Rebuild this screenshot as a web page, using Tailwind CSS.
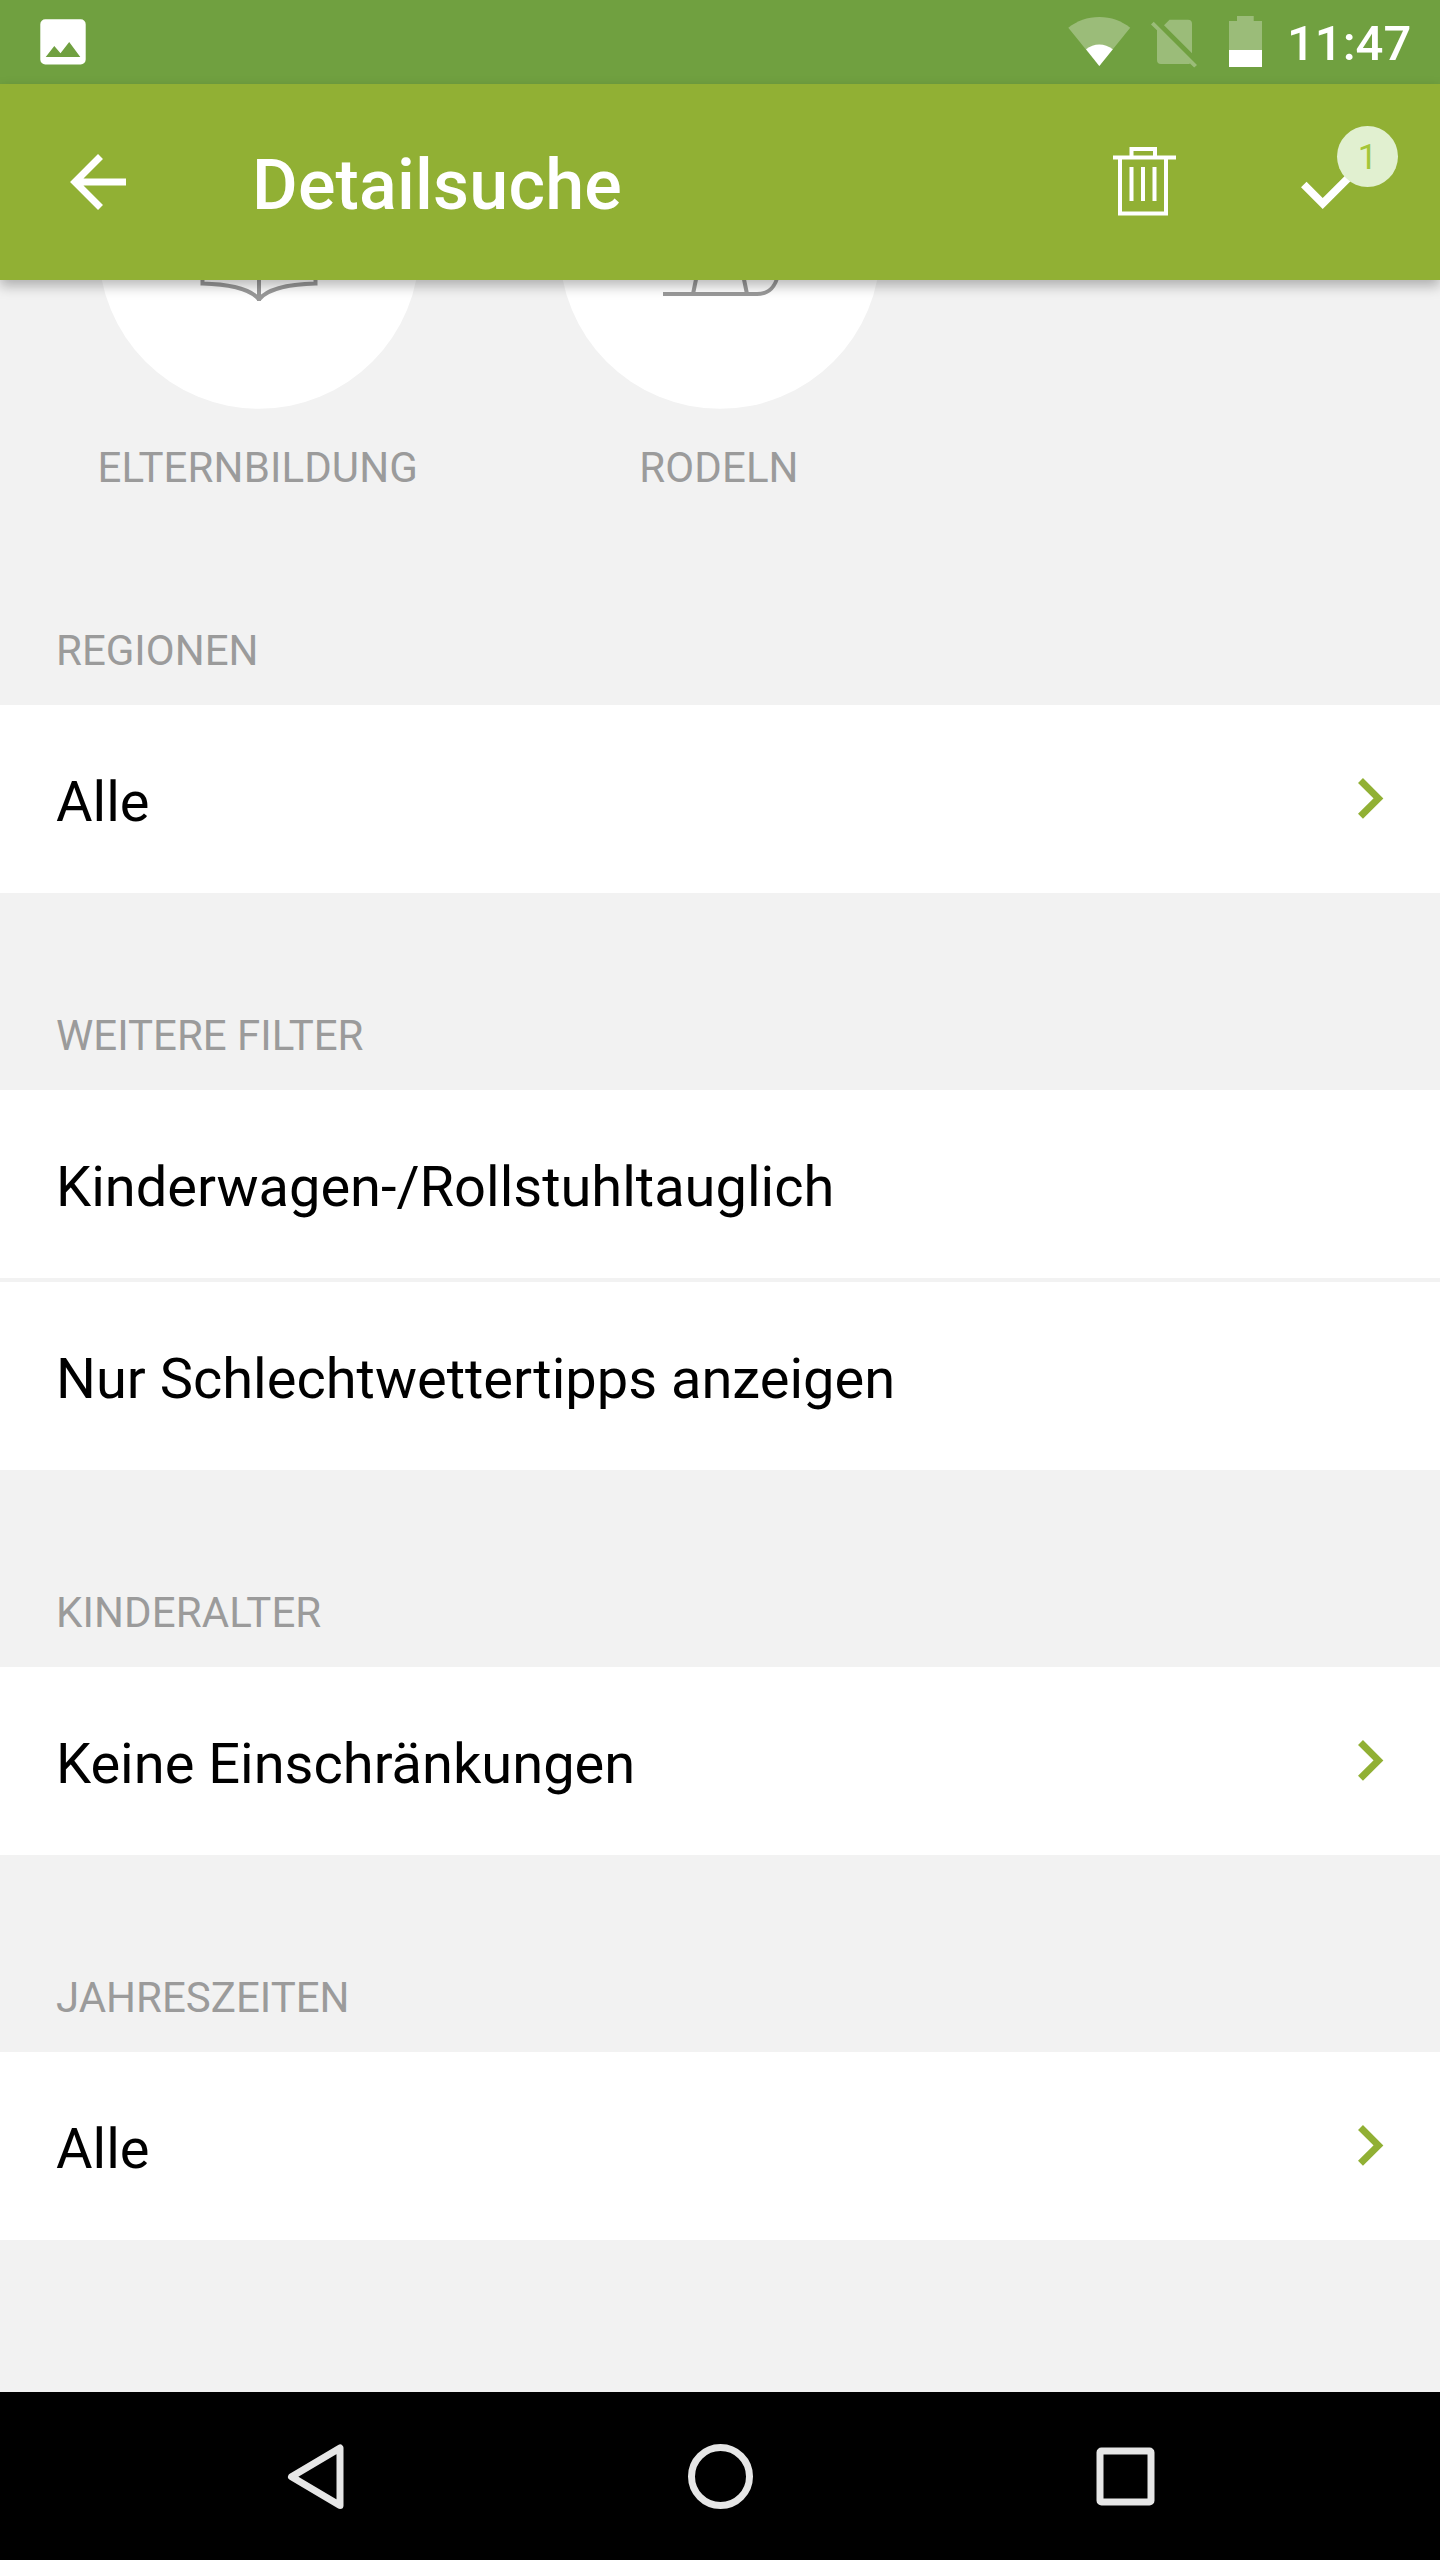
<!DOCTYPE html>
<html lang="de">
<head>
  <meta charset="UTF-8">
  <meta name="viewport" content="width=device-width, initial-scale=1.0">
  <title>Detailsuche</title>
  <script src="https://cdn.jsdelivr.net/npm/@tailwindcss/browser@4"></script>
  <style>
    body {
      font-family: Roboto, 'Noto Sans', sans-serif;
    }
  </style>
</head>
<body class="w-[1440px] h-[2560px] flex flex-col overflow-hidden bg-[#f2f2f2] text-black">

  <!-- Status bar -->
  <div class="h-[84px] shrink-0 flex items-start justify-between bg-[#70a040] text-white z-10">
    <svg class="ml-[35px] mt-[14px]" width="56" height="56" viewBox="35 14 56 56" fill="#fff">
      <path fill-rule="evenodd" d="M45.300 19.200H80.700A5 5 0 0 1 85.700 24.200V59.500A5 5 0 0 1 80.700 64.500H45.300A5 5 0 0 1 40.300 59.500V24.200A5 5 0 0 1 45.300 19.200ZM45.700 57H80.300L69.200 42L60.500 53.300L54.300 46Z"/>
    </svg>
    <div class="flex items-start">
      <svg width="210" height="84" viewBox="1060 0 210 84" fill="#fff">
        <path fill-opacity=".3" d="M1099.300 66L1068.300 27.700C1077 21 1087.500 17 1099.300 17S1121.500 21 1130.200 27.700Z"/>
        <path d="M1099.300 66L1086 49.300C1090 46 1094.500 44.500 1099.300 44.500S1108.600 46 1112.800 49.300Z"/>
        <path fill-opacity=".3" d="M1164 25.200L1169.500 19.700H1188A4 4 0 0 1 1192 23.700V53.200Z"/>
        <path fill-opacity=".3" d="M1153.700 21.800L1197 65L1194.200 67.500L1190 63.400Q1189 64 1188 64H1161A4 4 0 0 1 1157 60V30.300L1151 24.500Z"/>
        <path fill-opacity=".3" d="M1229 50V21H1237V16H1253.700V21H1262V50Z"/>
        <path d="M1229 50H1262V67H1229Z"/>
      </svg>
      <span class="w-[170px] pl-[17px] pt-[15px] text-[49px] leading-[58px] font-medium">11:47</span>
    </div>
  </div>

  <!-- Toolbar -->
  <header class="h-[196px] shrink-0 flex items-center bg-[#91b034] text-white shadow-[0_6px_12px_rgba(0,0,0,0.28)] z-10">
    <svg width="252" height="196" viewBox="0 84 252 196" fill="none" stroke="#fff" stroke-width="7">
      <path d="M126 182H76M100.500 156.500L75 182L100.500 207.500"/>
    </svg>
    <h1 class="grow pt-[5px] text-[70px] leading-[82px] font-medium tracking-[0.2px]">Detailsuche</h1>
    <svg width="100" height="196" viewBox="1100 84 100 196" fill="none" stroke="#fff" stroke-width="4">
      <path d="M1113 157.500H1176M1131.500 157V149H1155V157M1120 158V213.500H1166V158M1131.500 167V201M1143 167V201M1154.500 167V201"/>
    </svg>
    <div class="relative w-[240px] h-[196px]">
      <svg width="240" height="196" viewBox="1200 84 240 196" fill="#fff">
        <path transform="translate(1287.800 135.300) scale(3.880)" d="M9 16.170L4.830 12L3.410 13.410L9 19L21 7L19.590 5.590Z"/>
      </svg>
      <span class="absolute left-[137px] top-[42px] size-[61px] rounded-full bg-[#e1f0d0] text-[#a4c639] text-[35px] leading-[63px] text-center">1</span>
    </div>
  </header>

  <!-- Filter list -->
  <main class="grow min-h-0">
    <div class="-mt-[192px] h-[420px] px-[28px] grid grid-cols-3">
      <div class="flex flex-col items-center">
        <svg width="320" height="321" viewBox="99 88 320 321" fill="none" stroke="#999" stroke-width="4">
          <circle cx="259" cy="248.500" r="160.300" fill="#fff" stroke="none"/>
          <path d="M259 301V220M259 299.500C250 288 225 284 202.500 283.500V210C225 210 250 212 259 222C268 212 293 210 315.500 210V283.500C293 284 268 288 259 299.500"/>
        </svg>
        <span class="mt-[34px] pr-[2px] text-[42px] leading-[49px] tracking-[0.1px] text-[#9b9b9b]">ELTERNBILDUNG</span>
      </div>
      <div class="flex flex-col items-center">
        <svg width="320" height="321" viewBox="560 88 320 321" fill="none" stroke="#999" stroke-width="4">
          <circle cx="720" cy="248.500" r="160.300" fill="#fff" stroke="none"/>
          <path d="M663 294H757C769 294 776 286 778 274M693 294L700 260M747 294L740 260"/>
        </svg>
        <span class="mt-[34px] pr-[2px] text-[42px] leading-[49px] tracking-[0.1px] text-[#9b9b9b]">RODELN</span>
      </div>
    </div>

    <section>
      <h2 class="h-[197px] px-[56px] pt-[118px] text-[42px] leading-[49px] text-[#9b9b9b]">REGIONEN</h2>
      <div class="h-[188px] px-[56px] flex items-center justify-between bg-white text-[56px] leading-[66px]">
        <span class="pt-[6px]">Alle</span>
        <svg width="27" height="42" viewBox="0 0 27 42" fill="none" stroke="#91b034" stroke-width="7"><path d="M3.500 2.500L21.400 20.400L3.500 38.300"/></svg>
      </div>
    </section>

    <section>
      <h2 class="h-[197px] px-[56px] pt-[118px] text-[42px] leading-[49px] text-[#9b9b9b]">WEITERE FILTER</h2>
      <div class="h-[188px] px-[56px] flex items-center bg-white text-[56px] leading-[66px]">
        <span class="pt-[6px]">Kinderwagen-/Rollstuhltauglich</span>
      </div>
      <div class="mt-1 h-[188px] px-[56px] flex items-center bg-white text-[56px] leading-[66px]">
        <span class="pt-[6px]">Nur Schlechtwettertipps anzeigen</span>
      </div>
    </section>

    <section>
      <h2 class="h-[197px] px-[56px] pt-[118px] text-[42px] leading-[49px] tracking-[0.1px] text-[#9b9b9b]">KINDERALTER</h2>
      <div class="h-[188px] px-[56px] flex items-center justify-between bg-white text-[56px] leading-[66px]">
        <span class="pt-[6px]">Keine Einschränkungen</span>
        <svg width="27" height="42" viewBox="0 0 27 42" fill="none" stroke="#91b034" stroke-width="7"><path d="M3.500 2.500L21.400 20.400L3.500 38.300"/></svg>
      </div>
    </section>

    <section>
      <h2 class="h-[197px] px-[56px] pt-[118px] text-[42px] leading-[49px] text-[#9b9b9b]">JAHRESZEITEN</h2>
      <div class="h-[188px] px-[56px] flex items-center justify-between bg-white text-[56px] leading-[66px]">
        <span class="pt-[6px]">Alle</span>
        <svg width="27" height="42" viewBox="0 0 27 42" fill="none" stroke="#91b034" stroke-width="7"><path d="M3.500 2.500L21.400 20.400L3.500 38.300"/></svg>
      </div>
    </section>
  </main>

  <!-- Navigation bar -->
  <nav class="h-[168px] shrink-0 bg-black z-10">
    <svg width="1440" height="168" viewBox="0 2392 1440 168" fill="none" stroke="#e6e6e6" stroke-width="7">
      <path stroke-linejoin="round" d="M340 2448V2505.500L291.500 2476.700Z"/>
      <circle cx="720.500" cy="2476.500" r="29"/>
      <rect x="1100" y="2451" width="51" height="51" rx="1.500"/>
    </svg>
  </nav>
</body>
</html>
